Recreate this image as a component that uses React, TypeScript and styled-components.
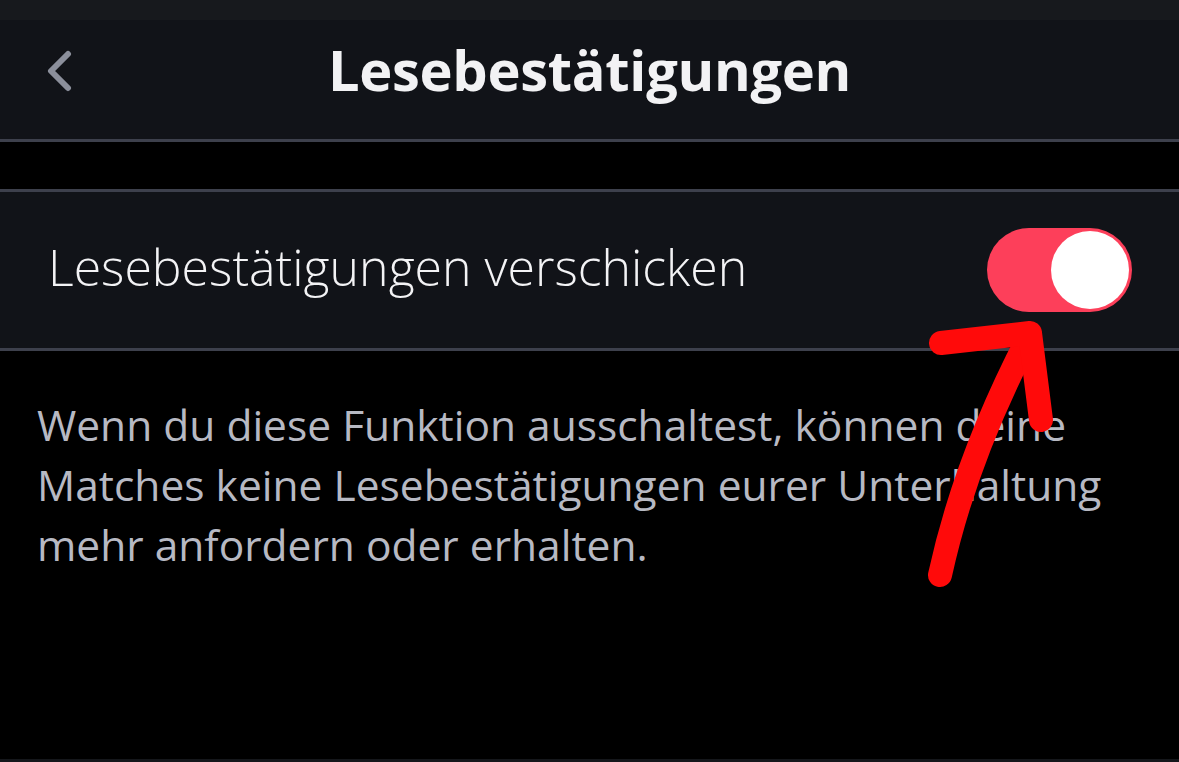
import React, { useState } from "react"
import styled, { createGlobalStyle } from "styled-components"

const GlobalStyle = createGlobalStyle`
  html, body {
    margin: 0;
    padding: 0;
    background: #000;
  }
  body {
    font-family: "Open Sans", Lato, "Liberation Sans", sans-serif;
  }
`

const App: React.FC = () => {
  const [readReceipts, setReadReceipts] = useState(true)

  return (
    <Page>
      <GlobalStyle />
      <StatusStrip />
      <Header>
        <BackButton aria-label="Zurück">
          <svg width="30" height="42" viewBox="0 0 30 42" fill="none">
            <path d="M24 4 L7 21 L24 38" stroke="#8b8f9b" strokeWidth="6" strokeLinecap="round" strokeLinejoin="round" />
          </svg>
        </BackButton>
        <Title>Lesebestätigungen</Title>
      </Header>

      <Gap />

      <SettingRow>
        <RowLabel>Lesebestätigungen verschicken</RowLabel>
        <Switch $on={readReceipts} onClick={() => setReadReceipts((v) => !v)}>
          <Knob />
        </Switch>
      </SettingRow>

      <Description>
        Wenn du diese Funktion ausschaltest, können deine
        <br />
        Matches keine Lesebestätigungen eurer Unterhaltung
        <br />
        mehr anfordern oder erhalten.
      </Description>

      <BottomStrip />

      {/* hand-drawn annotation */}
      <Annotation width="1179" height="762" viewBox="0 0 1179 762">
        <path
          d="M940 575 C952 520 975 440 1030 335"
          stroke="#ff0a0a"
          strokeWidth="24"
          strokeLinecap="round"
          fill="none"
        />
        <path
          d="M941 343 L1030 333 L1041 420"
          stroke="#ff0a0a"
          strokeWidth="24"
          strokeLinecap="round"
          strokeLinejoin="round"
          fill="none"
        />
      </Annotation>
    </Page>
  )
}

const Page = styled.div`
  position: relative;
  display: flex;
  flex-direction: column;
  width: 100%;
  height: 100vh;
  background: #000;
  overflow: hidden;
`

const StatusStrip = styled.div`
  height: 20px;
  background: #17191d;
`

const Header = styled.header`
  position: relative;
  display: flex;
  align-items: center;
  justify-content: center;
  height: 119px;
  background: #111318;
  border-bottom: 3px solid #3d404c;
`

const BackButton = styled.button`
  position: absolute;
  left: 44px;
  top: 30px;
  display: flex;
  background: none;
  border: none;
  padding: 0;
  cursor: pointer;
`

const Title = styled.h1`
  margin: 0 0 22px;
  font-size: 56px;
  font-weight: 700;
  color: #f2f2f4;
  letter-spacing: -0.3px;
`

const Gap = styled.div`
  height: 47px;
`

const SettingRow = styled.div`
  display: flex;
  align-items: center;
  justify-content: space-between;
  height: 156px;
  padding: 0 47px 0 48px;
  background: #111318;
  border-top: 3px solid #3d404c;
  border-bottom: 3px solid #3d404c;
`

const RowLabel = styled.span`
  margin-bottom: 6px;
  font-size: 50px;
  font-weight: 300;
  color: #f3f3f5;
`

const Switch = styled.button<{ $on: boolean }>`
  display: flex;
  align-items: center;
  justify-content: ${(p) => (p.$on ? "flex-end" : "flex-start")};
  width: 145px;
  height: 84px;
  padding: 3px;
  border: none;
  border-radius: 42px;
  background: ${(p) => (p.$on ? "#fd3f5a" : "#3d404c")};
  cursor: pointer;
`

const Knob = styled.span`
  width: 78px;
  height: 78px;
  border-radius: 50%;
  background: #fff;
`

const Description = styled.p`
  margin: 0;
  padding: 44px 40px 0 37px;
  font-size: 42.5px;
  line-height: 60px;
  color: #b7b9c3;
  white-space: nowrap;
`

const BottomStrip = styled.div`
  margin-top: auto;
  height: 3px;
  background: #15171b;
`

const Annotation = styled.svg`
  position: absolute;
  top: 0;
  left: 0;
  pointer-events: none;
`

export default App
